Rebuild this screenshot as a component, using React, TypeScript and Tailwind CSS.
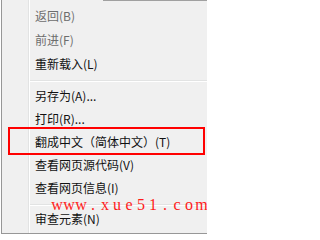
const items: ({ label: string; disabled?: boolean; h: string } | "sep")[] = [
  { label: "返回(B)", disabled: true, h: "h-[24px]" },
  { label: "前进(F)", disabled: true, h: "h-[24px]" },
  { label: "重新载入(L)", h: "h-[24px]" },
  "sep",
  { label: "另存为(A)...", h: "h-[23px]" },
  { label: "打印(R)...", h: "h-[23px]" },
  { label: "翻成中文（简体中文）(T)", h: "h-[23px]" },
  { label: "查看网页源代码(V)", h: "h-[23px]" },
  { label: "查看网页信息(I)", h: "h-[23px]" },
  "sep",
  { label: "审查元素(N)", h: "h-[23px]" },
];

const watermark = "www.xue51.com".split("");

export default function App() {
  return (
    <div
      className="relative w-[207px] h-[234px] overflow-hidden bg-white"
      style={{ fontFamily: '"Noto Sans CJK SC", "Liberation Sans", sans-serif' }}
    >
      <div className="ml-px flex h-full border-l border-b border-[#979797] bg-[#f0f0f0]">
        {/* icon gutter */}
        <div className="w-[27px] border-r border-[#e2e3e3]" />
        <div className="w-px bg-white" />
        <div className="flex flex-1 flex-col pt-[4px]">
          {items.map((it, i) =>
            it === "sep" ? (
              <div key={i} className={i === 3 ? "h-[8px] pt-[4px]" : "h-[8px] pt-[5px]"}>
                <div className="h-px bg-[#e2e3e3]" />
                <div className="h-px bg-white" />
              </div>
            ) : (
              <div
                key={i}
                className={`${it.h} flex items-center whitespace-nowrap pl-[5px] text-[12px] ${
                  it.disabled ? "text-[#6d6d6d]" : "text-[#111]"
                }`}
              >
                {it.label}
              </div>
            )
          )}
        </div>
      </div>

      {/* top edge */}
      <div className="absolute left-[103px] right-0 top-0 h-px bg-[#a0a0a0]" />

      {/* highlight annotation */}
      <div className="absolute left-[8px] top-[127px] h-[28px] w-[197px] border-2 border-[#ff0000]" />

      {/* watermark */}
      <div
        className="absolute left-[51px] top-[196px] flex text-[16px] leading-[17px] text-[#ff1a1a]"
        style={{ fontFamily: '"Liberation Serif", serif' }}
      >
        {watermark.map((c, i) => (
          <span key={i} className={i === watermark.length - 1 ? "inline-block w-[13px] text-center" : "inline-block w-[12px] text-center"}>
            {c}
          </span>
        ))}
      </div>
    </div>
  );
}
